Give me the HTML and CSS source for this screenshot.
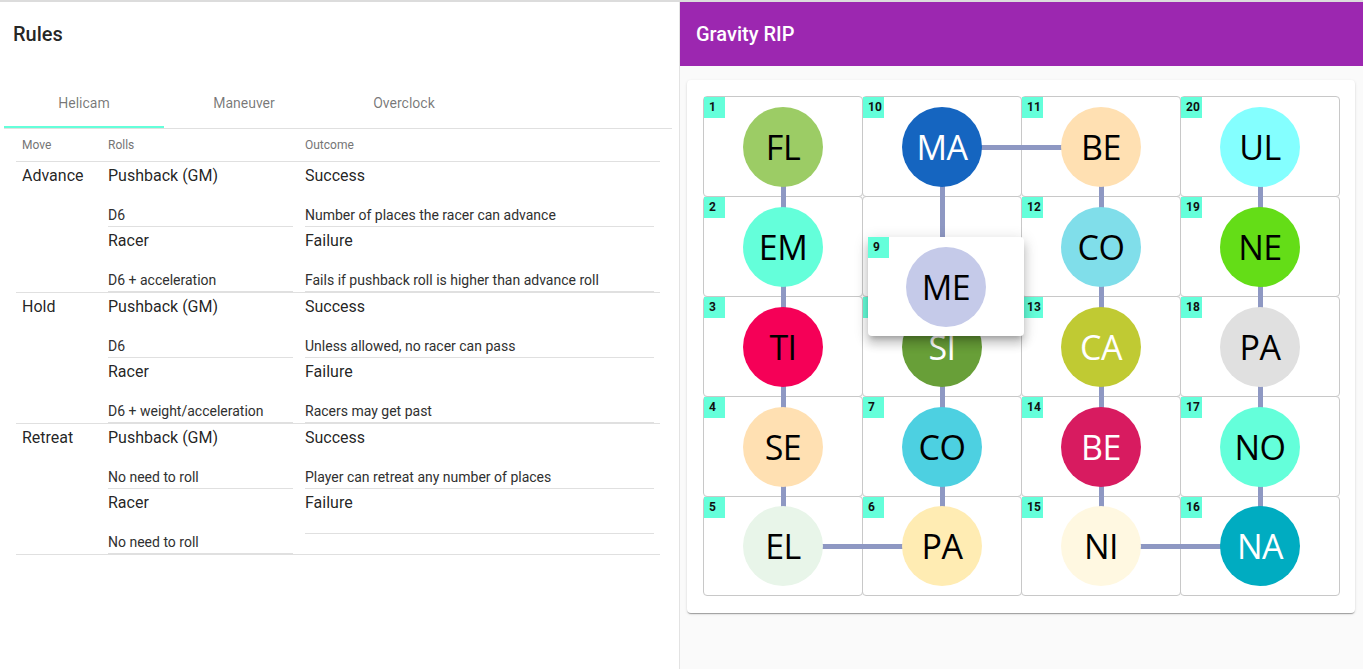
FILE: index.html
```html
<!DOCTYPE html>
<html lang="en">
<head>
<meta charset="utf-8">
<title>Gravity RIP</title>
<link rel="stylesheet" href="styles.css">
</head>
<body>
<div class="app">
  <section class="rules">
    <div class="rules-title">Rules</div>
    <div class="tabs">
      <div class="tab active">Helicam</div>
      <div class="tab">Maneuver</div>
      <div class="tab">Overclock</div>
    </div>
    <div class="table">
      <div class="thead">
        <div class="th">Move</div>
        <div class="th">Rolls</div>
        <div class="th">Outcome</div>
      </div>

      <div class="tr">
        <div class="td move">Advance</div>
        <div class="td">
          <div class="item"><div class="primary">Pushback (GM)</div><div class="secondary">D6</div></div>
          <div class="item"><div class="primary">Racer</div><div class="secondary">D6 + acceleration</div></div>
        </div>
        <div class="td">
          <div class="item"><div class="primary">Success</div><div class="secondary">Number of places the racer can advance</div></div>
          <div class="item"><div class="primary">Failure</div><div class="secondary">Fails if pushback roll is higher than advance roll</div></div>
        </div>
      </div>

      <div class="tr">
        <div class="td move">Hold</div>
        <div class="td">
          <div class="item"><div class="primary">Pushback (GM)</div><div class="secondary">D6</div></div>
          <div class="item"><div class="primary">Racer</div><div class="secondary">D6 + weight/acceleration</div></div>
        </div>
        <div class="td">
          <div class="item"><div class="primary">Success</div><div class="secondary">Unless allowed, no racer can pass</div></div>
          <div class="item"><div class="primary">Failure</div><div class="secondary">Racers may get past</div></div>
        </div>
      </div>

      <div class="tr">
        <div class="td move">Retreat</div>
        <div class="td">
          <div class="item"><div class="primary">Pushback (GM)</div><div class="secondary">No need to roll</div></div>
          <div class="item"><div class="primary">Racer</div><div class="secondary">No need to roll</div></div>
        </div>
        <div class="td">
          <div class="item"><div class="primary">Success</div><div class="secondary">Player can retreat any number of places</div></div>
          <div class="item"><div class="primary">Failure</div><div class="secondary"></div></div>
        </div>
      </div>
    </div>
  </section>

  <section class="board-panel">
    <header class="board-header">Gravity RIP</header>
    <div class="board-card">
      <div class="grid">
        <!-- row 1 -->
        <div class="cell"><span class="link down"></span><div class="node c-fl">FL</div><span class="badge">1</span></div>
        <div class="cell"><span class="link down"></span><span class="link right"></span><div class="node c-ma light">MA</div><span class="badge">10</span></div>
        <div class="cell"><span class="link left"></span><span class="link down"></span><div class="node c-be1">BE</div><span class="badge">11</span></div>
        <div class="cell"><span class="link down"></span><div class="node c-ul">UL</div><span class="badge">20</span></div>
        <!-- row 2 -->
        <div class="cell"><span class="link up"></span><span class="link down"></span><div class="node c-em">EM</div><span class="badge">2</span></div>
        <div class="cell"><span class="link up"></span><span class="link down"></span></div>
        <div class="cell"><span class="link up"></span><span class="link down"></span><div class="node c-co1">CO</div><span class="badge">12</span></div>
        <div class="cell"><span class="link up"></span><span class="link down"></span><div class="node c-ne">NE</div><span class="badge">19</span></div>
        <!-- row 3 -->
        <div class="cell"><span class="link up"></span><span class="link down"></span><div class="node c-ti">TI</div><span class="badge">3</span></div>
        <div class="cell"><span class="link up"></span><span class="link down"></span><div class="node c-si light">SI</div><span class="badge">8</span></div>
        <div class="cell"><span class="link up"></span><span class="link down"></span><div class="node c-ca light">CA</div><span class="badge">13</span></div>
        <div class="cell"><span class="link up"></span><span class="link down"></span><div class="node c-pa1">PA</div><span class="badge">18</span></div>
        <!-- row 4 -->
        <div class="cell"><span class="link up"></span><span class="link down"></span><div class="node c-se">SE</div><span class="badge">4</span></div>
        <div class="cell"><span class="link up"></span><span class="link down"></span><div class="node c-co2">CO</div><span class="badge">7</span></div>
        <div class="cell"><span class="link up"></span><span class="link down"></span><div class="node c-be2 light">BE</div><span class="badge">14</span></div>
        <div class="cell"><span class="link up"></span><span class="link down"></span><div class="node c-no">NO</div><span class="badge">17</span></div>
        <!-- row 5 -->
        <div class="cell"><span class="link up"></span><span class="link right"></span><div class="node c-el">EL</div><span class="badge">5</span></div>
        <div class="cell"><span class="link left"></span><span class="link up"></span><div class="node c-pa2">PA</div><span class="badge">6</span></div>
        <div class="cell"><span class="link up"></span><span class="link right"></span><div class="node c-ni">NI</div><span class="badge">15</span></div>
        <div class="cell"><span class="link left"></span><span class="link up"></span><div class="node c-na light">NA</div><span class="badge">16</span></div>

        <div class="drag-preview"><div class="node c-me">ME</div><span class="badge">9</span></div>
      </div>
    </div>
  </section>
</div>
</body>
</html>
```

FILE: styles.css
```css
* { box-sizing: border-box; }

html, body {
  margin: 0;
  padding: 0;
  height: 100%;
}

body {
  font-family: Roboto, "Liberation Sans", Arial, sans-serif;
  color: rgba(0, 0, 0, 0.87);
  background: #ffffff;
  border-top: 2px solid #dcdcdc;
  overflow: hidden;
}

.app {
  display: flex;
  height: 667px;
}

/* ---------- Rules panel ---------- */
.rules {
  width: 680px;
  flex: none;
  background: #ffffff;
  border-right: 1px solid #e3e3e3;
}

.rules-title {
  height: 64px;
  display: flex;
  align-items: center;
  padding-left: 13px;
  font-size: 20px;
  font-weight: 500;
  color: rgba(0, 0, 0, 0.87);
}

.tabs {
  display: flex;
  margin: 14px 7px 0 4px;
  border-bottom: 1px solid #e0e0e0;
}

.tab {
  width: 160px;
  height: 48px;
  display: flex;
  align-items: center;
  justify-content: center;
  font-size: 14px;
  color: rgba(0, 0, 0, 0.54);
  border-bottom: 2px solid transparent;
}

.tab.active {
  border-bottom-color: #64ffda;
}

.table {
  margin: 0 19px 0 16px;
}

.thead,
.tr {
  display: grid;
  grid-template-columns: 86px 197px 361px;
  border-bottom: 1px solid #e0e0e0;
}

.thead {
  height: 33px;
  align-items: center;
}

.th {
  padding: 0 6px;
  font-size: 12px;
  color: #757575;
}

.td {
  padding: 0 6px;
}

.move {
  padding-top: 2px;
  font-size: 16px;
  line-height: 24px;
}

.item {
  padding: 2px 0 1px;
  border-bottom: 1px solid #e0e0e0;
}

.primary {
  font-size: 16px;
  line-height: 24px;
  color: rgba(0, 0, 0, 0.87);
}

.secondary {
  margin-top: 17px;
  font-size: 14px;
  line-height: 20px;
  color: #303030;
}

/* ---------- Board panel ---------- */
.board-panel {
  flex: 1;
  background: #fafafa;
}

.board-header {
  height: 64px;
  background: #9c27b0;
  color: #ffffff;
  display: flex;
  align-items: center;
  padding-left: 16px;
  font-size: 20px;
  font-weight: 500;
}

.board-card {
  margin: 14px 8px 0 7px;
  padding: 16px;
  background: #ffffff;
  border-radius: 4px;
  box-shadow: 0 2px 1px -1px rgba(0, 0, 0, 0.2),
              0 1px 1px 0 rgba(0, 0, 0, 0.14),
              0 1px 3px 0 rgba(0, 0, 0, 0.12);
}

.grid {
  position: relative;
  display: grid;
  grid-template-columns: repeat(4, 1fr);
  grid-auto-rows: 100px;
  padding-bottom: 1px;
}

.cell {
  position: relative;
  margin: 0 -1px -1px 0;
  border: 1px solid #c8c8c8;
  border-radius: 4px;
  background: #ffffff;
  display: flex;
  align-items: center;
  justify-content: center;
}

.grid > .cell:nth-child(n+17) { margin-bottom: 0; }

.link {
  position: absolute;
  background: #8e98c3;
}

.link.up,
.link.down {
  left: 50%;
  width: 5px;
  margin-left: -2px;
}

.link.up {
  top: -1px;
  height: calc(50% + 1px);
}

.link.down {
  top: 50%;
  bottom: -1px;
}

.link.left,
.link.right {
  top: 50%;
  height: 5px;
  margin-top: -2px;
}

.link.left {
  left: -1px;
  width: calc(50% + 1px);
}

.link.right {
  left: 50%;
  right: -1px;
}

.node {
  position: relative;
  width: 80px;
  height: 80px;
  border-radius: 50%;
  display: flex;
  align-items: center;
  justify-content: center;
  font-family: "Open Sans", "Noto Sans", sans-serif;
  font-size: 34px;
  letter-spacing: -0.5px;
  color: #000000;
}

.node.light { color: #ffffff; }

.badge {
  position: absolute;
  top: 0;
  left: 0;
  width: 21px;
  height: 21px;
  padding-left: 5px;
  background: #64ffda;
  font-size: 12px;
  font-weight: 700;
  line-height: 21px;
  color: #111111;
}

.drag-preview {
  position: absolute;
  left: 165px;
  top: 141px;
  width: 156px;
  height: 99px;
  background: #ffffff;
  border-radius: 4px;
  display: flex;
  align-items: center;
  justify-content: center;
  box-shadow: 0 5px 5px -3px rgba(0, 0, 0, 0.2),
              0 8px 10px 1px rgba(0, 0, 0, 0.14),
              0 3px 14px 2px rgba(0, 0, 0, 0.12);
}

/* node colours */
.c-fl  { background: #9ccc65; }
.c-ma  { background: #1565c0; }
.c-be1 { background: #ffe0b2; }
.c-ul  { background: #84ffff; }
.c-em  { background: #64ffda; }
.c-me  { background: #c5cae9; }
.c-co1 { background: #80deea; }
.c-ne  { background: #64dd17; }
.c-ti  { background: #f50057; }
.c-si  { background: #689f38; }
.c-ca  { background: #c0ca33; }
.c-pa1 { background: #e0e0e0; }
.c-se  { background: #ffe0b2; }
.c-co2 { background: #4dd0e1; }
.c-be2 { background: #d81b60; }
.c-no  { background: #64ffda; }
.c-el  { background: #e8f5e9; }
.c-pa2 { background: #ffecb3; }
.c-ni  { background: #fff8e1; }
.c-na  { background: #00acc1; }
```
